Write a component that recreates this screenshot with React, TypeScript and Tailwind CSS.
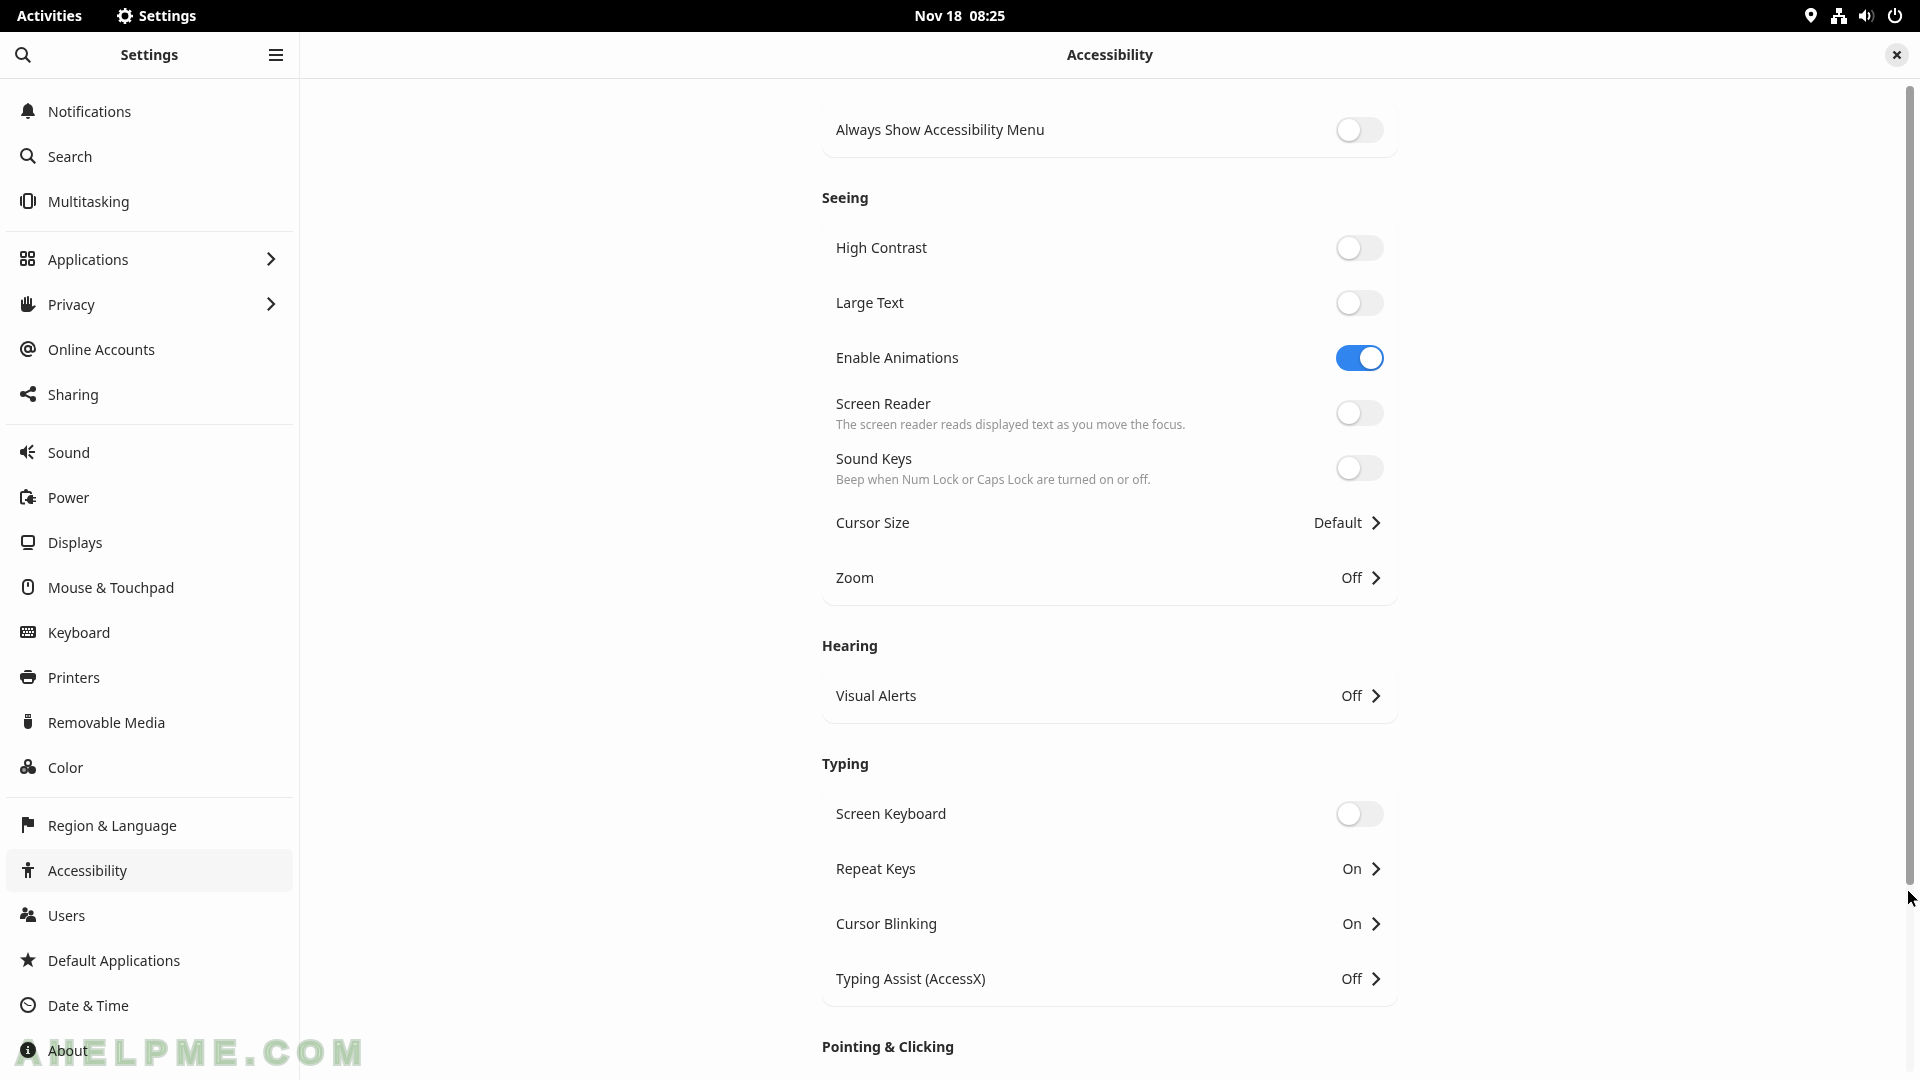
import { useState } from 'react';
import type { ReactNode } from 'react';

const icons: Record<string, ReactNode> = {
  gear: (
    <g fill="none" stroke="currentColor">
      <circle cx="8" cy="8" r="4.9" strokeWidth="2.9" />
      <circle cx="8" cy="8" r="6.9" strokeWidth="2.2" strokeDasharray="2.6 2.82" strokeDashoffset="1.3" />
    </g>
  ),
  search: (
    <g fill="none" stroke="currentColor" strokeWidth="2">
      <circle cx="6.5" cy="6.5" r="5.5" />
      <path d="M10.4 10.4 15.3 15.3" strokeWidth="2.2" />
    </g>
  ),
  menu: <path d="M1 2h14v2H1zM1 7h14v2H1zM1 12h14v2H1z" />,
  bell: <path d="M8 0a1 1 0 0 0-1 1C4.400 1.600 3 3.800 3 6.500v3L1.300 11.600c-.5.700-.2 1.400.6 1.400h12.200c.8 0 1.100-.7.6-1.400L13 9.500v-3C13 3.800 11.600 1.600 9 1a1 1 0 0 0-1-1zM6 14a2 2 0 0 0 4 0z" />,
  multitasking: (
    <>
      <rect x="4" y="1" width="8" height="14" rx="2" fill="none" stroke="currentColor" strokeWidth="2" />
      <path d="M0 4.500C0 3.600.600 3 2 3v10c-1.400 0-2-.6-2-1.500zM16 4.500C16 3.600 15.400 3 14 3v10c1.400 0 2-.6 2-1.500z" />
    </>
  ),
  apps: (
    <g fill="none" stroke="currentColor" strokeWidth="2">
      <rect x="1" y="1" width="5" height="5" rx="1" />
      <rect x="9" y="1" width="5" height="5" rx="1" />
      <rect x="1" y="9" width="5" height="5" rx="1" />
      <rect x="9" y="9" width="5" height="5" rx="1" />
    </g>
  ),
  hand: (
    <>
      <path d="M1 8h11v2.500L14.200 9.600c1.300-.5 2.200.4 1.300 1.200L12.500 14c-1 1.300-2 2-3.500 2H4.500C2.300 16 1 14.700 1 12.500z" />
      <g stroke="currentColor" strokeWidth="2" strokeLinecap="round">
        <path d="M2 4.500V9M5 2v7M8 1v8M11 3v7" />
      </g>
    </>
  ),
  at: (
    <g fill="none" stroke="currentColor" strokeWidth="2">
      <circle cx="8" cy="8" r="3" />
      <path d="M11 5v4c0 2.500 4 2.500 4-1a7 7 0 1 0-3.300 6" />
    </g>
  ),
  share: (
    <>
      <circle cx="3" cy="8" r="3" />
      <circle cx="13" cy="3" r="3" />
      <circle cx="13" cy="13" r="3" />
      <path d="M13 3 3 8l10 5" fill="none" stroke="currentColor" strokeWidth="2" />
    </>
  ),
  sound: (
    <>
      <path d="M7 1 3.500 5H2C.800 5 0 6 0 7v2c0 1 .8 2 2 2h1.500L7 15z" />
      <path d="M9 8h6M8.700 5.500 13 1.200M8.700 10.500 13 14.800" fill="none" stroke="currentColor" strokeWidth="2" />
    </>
  ),
  power: (
    <>
      <path d="M11 5V4.500C11 3.500 10.600 3 9.500 3h-7C1.500 3 1 3.500 1 4.500v8.500c0 1 .5 1.500 1.500 1.500H5" fill="none" stroke="currentColor" strokeWidth="2" />
      <path d="M4 2c0-1.200.7-2 2-2s2 .8 2 2zM11 6h2v2h3v1.500h-3v2h3V13h-3v2h-2c-2 0-3.500-1-4-3H5v-2h2c.5-2.500 2-4 4-4z" />
    </>
  ),
  display: (
    <>
      <rect x="2" y="2" width="12" height="10" rx="2" fill="none" stroke="currentColor" strokeWidth="2" />
      <path d="M3 16c0-1.300.8-2 2-2h6c1.200 0 2 .7 2 2z" />
    </>
  ),
  mouse: (
    <>
      <rect x="3" y="1" width="10" height="14" rx="4" fill="none" stroke="currentColor" strokeWidth="2" />
      <path d="M8 4v3" stroke="currentColor" strokeWidth="2" strokeLinecap="round" />
    </>
  ),
  keyboard: (
    <path fillRule="evenodd" d="M2 2h12c1.300 0 2 .7 2 2v8c0 1.300-.7 2-2 2H2c-1.300 0-2-.7-2-2V4c0-1.300.7-2 2-2zM2 4v2h2V4zM5 4v2h2V4zM8 4v2h2V4zM11 4v2h2V4zM3 7v2h2V7zM6 7v2h2V7zM9 7v2h2V7zM12 7v2h2V7zM2 10v2h2v-2zM5 10v2h5v-2zM11 10v2h2v-2z" />
  ),
  printer: (
    <path fillRule="evenodd" d="M4 3c0-1.300.7-2 2-2h4c1.300 0 2 .7 2 2zM2.500 4h11C15.200 4 16 5 16 6.500V9c0 1.500-.8 2.500-2 2.500 0 2-1 3.500-3 3.500H5c-2 0-3-1.500-3-3.500C.800 11.500 0 10.500 0 9V6.500C0 5 .800 4 2.500 4zM4 10v3h8v-3z" />
  ),
  usb: (
    <path fillRule="evenodd" d="M5 0h6v4H5zM6 1.200v1.500h1.500V1.200zM8.700 1.200v1.500h1.500V1.200zM4 5h8v6c0 2.500-1.500 4-4 4s-4-1.500-4-4z" />
  ),
  color: (
    <>
      <circle cx="8" cy="4" r="3" fill="none" stroke="currentColor" strokeWidth="2" />
      <circle cx="4" cy="11" r="3" fill="#999999" stroke="currentColor" strokeWidth="2" />
      <circle cx="12" cy="11" r="4" />
    </>
  ),
  flag: <path d="M2 1c0-.6.400-1 1-1h5c.6 0 1 .4 1 1v1h4c.6 0 1 .4 1 1v6c0 .6-.4 1-1 1H8c-.6 0-1-.4-1-1v-.500H4V16H2z" />,
  person: <path d="M8 0a2.200 2.200 0 1 1 0 4.400A2.200 2.200 0 0 1 8 0zM2 5h12v2h-3v9H9v-5H7v5H5V7H2z" />,
  users: (
    <>
      <circle cx="5" cy="2.800" r="2.600" />
      <circle cx="11" cy="5.800" r="2.600" />
      <path d="M0 10.500C0 8 1.300 6 3.500 6H8c-.2 1.500 0 2 .3 2.600C6.500 9 5.300 10.300 5.100 12H0zM6 13c0-2.500 1.500-4 3.500-4h3c2 0 3.500 1.500 3.500 4v2H6z" />
    </>
  ),
  star: <path d="M8 0 10 5.300 16 5.600 11.300 9.400 13 15.300 8 12 3 15.300 4.700 9.400 0 5.600 6 5.300z" />,
  clock: (
    <>
      <circle cx="8" cy="8" r="7" fill="none" stroke="currentColor" strokeWidth="2" />
      <path d="M4 5.500 8 8.500h3.500" fill="none" stroke="currentColor" strokeWidth="1.200" />
    </>
  ),
  info: (
    <path fillRule="evenodd" d="M8 0a8 8 0 1 1 0 16A8 8 0 0 1 8 0zM7 4v2h2V4zM6 7v1h1v3H6v1h4v-1H9V7z" />
  ),
  chevron: <path d="M4.800 1.800 11 8l-6.200 6.200" fill="none" stroke="currentColor" strokeWidth="2.200" />,
  location: <path fillRule="evenodd" d="M8 0c3.400 0 6 2.500 6 5.800 0 3.200-3 6.200-6 9.200-3-3-6-6-6-9.200C2 2.500 4.600 0 8 0zM8 3.700a2.300 2.300 0 1 0 0 4.600 2.300 2.300 0 0 0 0-4.600z" />,
  network: <path d="M5 0h6v5H9v2h5v3h2v6h-6v-6h2V9H4v1h2v6H0v-6h2V7h5V5H5z" />,
  volume: (
    <>
      <path d="M7 1v13L3 10.500H0v-5h3z" />
      <path d="M9 4.500c2 1.500 2 5 0 7" fill="none" stroke="currentColor" strokeWidth="2" />
      <path d="M12.500 2c3 3.500 3 8.500 0 12" fill="none" stroke="currentColor" strokeWidth="1.800" opacity=".35" />
    </>
  ),
  shutdown: (
    <g fill="none" stroke="currentColor" strokeWidth="2">
      <path d="M4.800 2.700a6.200 6.200 0 1 0 6.400 0" />
      <path d="M8 0v7" />
    </g>
  ),
  close: <path d="m4.500 4.500 7 7M11.500 4.500l-7 7" stroke="currentColor" strokeWidth="2.400" />,
};

function Icon({ name }: { name: string }) {
  return (
    <svg className="w-4 h-4 shrink-0" viewBox="0 0 16 16" fill="currentColor" aria-hidden="true">
      {icons[name]}
    </svg>
  );
}

type Panel = { icon: string; label: string; submenu?: boolean };

const panelGroups: Panel[][] = [
  [
    { icon: 'bell', label: 'Notifications' },
    { icon: 'search', label: 'Search' },
    { icon: 'multitasking', label: 'Multitasking' },
  ],
  [
    { icon: 'apps', label: 'Applications', submenu: true },
    { icon: 'hand', label: 'Privacy', submenu: true },
    { icon: 'at', label: 'Online Accounts' },
    { icon: 'share', label: 'Sharing' },
  ],
  [
    { icon: 'sound', label: 'Sound' },
    { icon: 'power', label: 'Power' },
    { icon: 'display', label: 'Displays' },
    { icon: 'mouse', label: 'Mouse & Touchpad' },
    { icon: 'keyboard', label: 'Keyboard' },
    { icon: 'printer', label: 'Printers' },
    { icon: 'usb', label: 'Removable Media' },
    { icon: 'color', label: 'Color' },
  ],
  [
    { icon: 'flag', label: 'Region & Language' },
    { icon: 'person', label: 'Accessibility' },
    { icon: 'users', label: 'Users' },
    { icon: 'star', label: 'Default Applications' },
    { icon: 'clock', label: 'Date & Time' },
    { icon: 'info', label: 'About' },
  ],
];

// a row is either a switch (on) or a link to a sub page (value)
type Row = { label: string; hint?: string; on?: boolean; value?: string };

const sections: { title?: string; rows: Row[] }[] = [
  { rows: [{ label: 'Always Show Accessibility Menu', on: false }] },
  {
    title: 'Seeing',
    rows: [
      { label: 'High Contrast', on: false },
      { label: 'Large Text', on: false },
      { label: 'Enable Animations', on: true },
      { label: 'Screen Reader', hint: 'The screen reader reads displayed text as you move the focus.', on: false },
      { label: 'Sound Keys', hint: 'Beep when Num Lock or Caps Lock are turned on or off.', on: false },
      { label: 'Cursor Size', value: 'Default' },
      { label: 'Zoom', value: 'Off' },
    ],
  },
  { title: 'Hearing', rows: [{ label: 'Visual Alerts', value: 'Off' }] },
  {
    title: 'Typing',
    rows: [
      { label: 'Screen Keyboard', on: false },
      { label: 'Repeat Keys', value: 'On' },
      { label: 'Cursor Blinking', value: 'On' },
      { label: 'Typing Assist (AccessX)', value: 'Off' },
    ],
  },
  { title: 'Pointing & Clicking', rows: [] },
];

function TopBar() {
  return (
    <header className="grid grid-cols-3 items-center h-8 shrink-0 bg-black text-white font-bold px-[17px]">
      <div className="flex items-center gap-[35px]">
        <button type="button">Activities</button>
        <button type="button" className="flex items-center gap-1.5">
          <Icon name="gear" />
          Settings
        </button>
      </div>
      <button type="button" className="justify-self-center whitespace-pre">{'Nov 18  08:25'}</button>
      <button type="button" aria-label="System menu" className="flex items-center gap-3 justify-self-end">
        <Icon name="location" />
        <Icon name="network" />
        <Icon name="volume" />
        <Icon name="shutdown" />
      </button>
    </header>
  );
}

function Sidebar() {
  const [active, setActive] = useState('Accessibility');
  return (
    <aside className="flex flex-col w-[300px] shrink-0 border-r border-[#ebebeb]">
      <div className="flex items-center justify-between h-[47px] shrink-0 border-b border-[#e3e3e3] px-[15px]">
        <button type="button" aria-label="Search"><Icon name="search" /></button>
        <h2 className="font-bold">Settings</h2>
        <button type="button" aria-label="Main menu"><Icon name="menu" /></button>
      </div>
      <nav className="flex flex-col gap-0.5 pt-[11px] px-1.5">
        {panelGroups.map((group, i) => (
          <div key={i} className="flex flex-col gap-0.5">
            {i > 0 && <hr className="mt-1.5 mb-1 border-[#ebebeb]" />}
            {group.map(panel => (
              <button
                key={panel.label}
                type="button"
                onClick={() => setActive(panel.label)}
                className={`flex items-center gap-3 h-[43px] px-3.5 pb-px rounded-md text-left ${active === panel.label ? 'bg-[#f6f6f6]' : ''}`}
              >
                <Icon name={panel.icon} />
                <span className="flex-1 pt-0.5">{panel.label}</span>
                {panel.submenu && <Icon name="chevron" />}
              </button>
            ))}
          </div>
        ))}
      </nav>
    </aside>
  );
}

function SwitchRow({ row }: { row: Row }) {
  const [on, setOn] = useState(row.on);
  return (
    <label className="flex items-center justify-between h-[55px] px-3.5">
      {row.hint ? (
        <span className="flex flex-col gap-px pt-[3px]">
          <span>{row.label}</span>
          <span className="text-xs leading-5 text-[#949494]">{row.hint}</span>
        </span>
      ) : (
        <span>{row.label}</span>
      )}
      <input
        type="checkbox"
        role="switch"
        checked={on}
        onChange={e => setOn(e.target.checked)}
        className="flex items-center appearance-none w-12 h-[26px] p-0.5 rounded-full bg-[#efefef] checked:bg-[#3185ee] checked:justify-end before:content-[''] before:size-[22px] before:rounded-full before:bg-white before:shadow-[0_1px_3px_rgba(0,0,0,0.3)]"
      />
    </label>
  );
}

function LinkRow({ row }: { row: Row }) {
  return (
    <button type="button" className="flex items-center w-full h-[55px] px-3.5 gap-1.5 text-left">
      <span className="flex-1">{row.label}</span>
      <span>{row.value}</span>
      <Icon name="chevron" />
    </button>
  );
}

function ScrollBar() {
  return (
    <div className="absolute top-[7px] bottom-2 right-1.5 w-2 rounded-full bg-[#f6f6f6]">
      <div className="h-[81%] rounded-full bg-[#9e9e9e]" />
      <svg className="w-3 h-5 mt-1" viewBox="-1 0 12 20" overflow="visible" aria-hidden="true">
        <path d="M.5.500v16l3.700-3.500 2.600 5.500 2.600-1.200L7 12h5z" fill="#000" stroke="#fff" />
      </svg>
    </div>
  );
}

export default function App() {
  return (
    <div className="relative flex flex-col h-screen overflow-hidden bg-[#fdfdfd] text-[#2b2b2b] text-sm font-['Noto_Sans',sans-serif]">
      <TopBar />
      <div className="flex flex-1 min-h-0">
        <Sidebar />
        <main className="flex flex-col flex-1 min-w-0">
          <div className="grid grid-cols-[1fr_auto_1fr] items-center h-[47px] shrink-0 border-b border-[#e3e3e3] px-[11px]">
            <h1 className="col-start-2 font-bold">Accessibility</h1>
            <button type="button" aria-label="Close" className="grid place-items-center justify-self-end size-6 rounded-full bg-[#e8e8e8]">
              <Icon name="close" />
            </button>
          </div>
          <div className="relative flex-1 min-h-0">
            <div className="h-full overflow-hidden pt-[23px]">
              <div className="max-w-xl mx-auto">
                {sections.map((section, i) => (
                  <section key={i}>
                    {section.title && <h3 className="mt-[31px] mb-3 font-bold">{section.title}</h3>}
                    {section.rows.length > 0 && (
                      <div className="rounded-xl shadow-[0_1px_1px_rgba(0,0,0,0.07),0_0_1px_rgba(0,0,0,0.05)]">
                        {section.rows.map(row =>
                          row.value ? <LinkRow key={row.label} row={row} /> : <SwitchRow key={row.label} row={row} />
                        )}
                      </div>
                    )}
                  </section>
                ))}
              </div>
            </div>
            <ScrollBar />
          </div>
        </main>
      </div>
      {/* site watermark */}
      <div className="absolute left-4 bottom-2.5 font-['Liberation_Sans',sans-serif] font-bold text-[34px] leading-9 tracking-[9px] text-[#8cc878]/35 [-webkit-text-stroke:4px_rgba(120,155,120,0.35)] mix-blend-multiply pointer-events-none">
        AHELPME.COM
      </div>
    </div>
  );
}
